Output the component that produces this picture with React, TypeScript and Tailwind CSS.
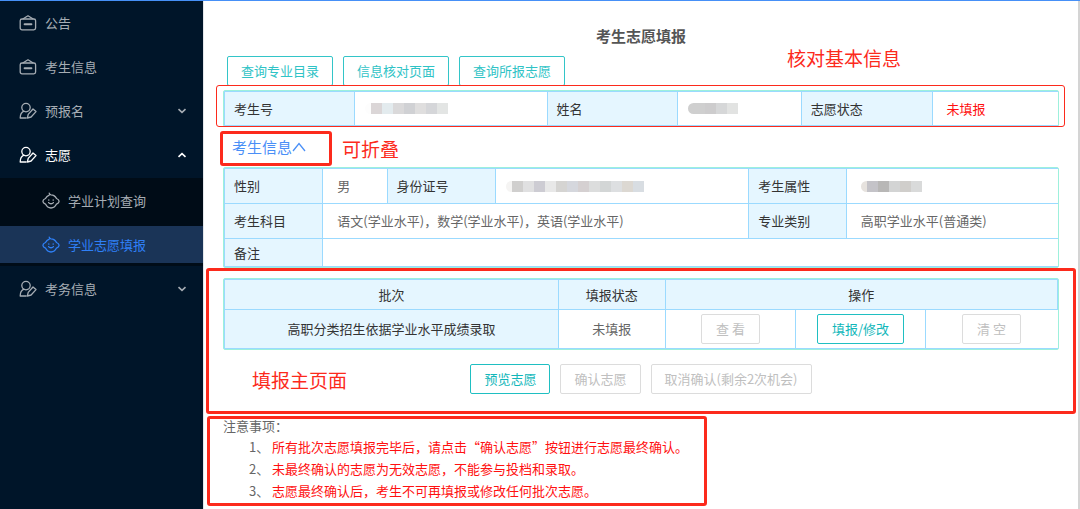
import React, { useState } from 'react';

type MenuItem = {
  label: string;
  icon: 'case' | 'user' | 'face';
  arrow?: 'up' | 'down';
};

const topItems: MenuItem[] = [
  { label: '公告', icon: 'case' },
  { label: '考生信息', icon: 'case' },
  { label: '预报名', icon: 'user', arrow: 'down' },
  { label: '志愿', icon: 'user', arrow: 'up' },
];

const subItems: MenuItem[] = [
  { label: '学业计划查询', icon: 'face' },
  { label: '学业志愿填报', icon: 'face' },
];

const notices = [
  '所有批次志愿填报完毕后，请点击“确认志愿”按钮进行志愿最终确认。',
  '未最终确认的志愿为无效志愿，不能参与投档和录取。',
  '志愿最终确认后，考生不可再填报或修改任何批次志愿。',
];

const MenuIcon: React.FC<{ name: MenuItem['icon'] }> = ({ name }) => (
  <svg
    viewBox="0 0 18 18"
    className="size-[18px] shrink-0"
    fill="none"
    stroke="currentColor"
    strokeWidth="1.3"
    strokeLinecap="round"
    strokeLinejoin="round"
    aria-hidden="true"
  >
    {name === 'case' && (
      <>
        <rect x="1.2" y="5" width="15.4" height="10.8" rx="1.8" />
        <path d="M4.2 4.8 9 1.800l4.800 3" />
        <path d="M5.600 10.200h6.800" strokeWidth="2" />
      </>
    )}
    {name === 'user' && (
      <>
        <circle cx="7" cy="5.600" r="4.200" />
        <path d="M4.800 9.200C2.400 10.400 1.200 12.600 1.200 16h6" />
        <path d="m8.400 16 .8-3.600 4.800-5.400 3 2.600-4.900 5.400z" />
      </>
    )}
    {name === 'face' && (
      <>
        <path d="M7.200 1.200c.2 1.100.7 1.500 1.800 1.600 2.400.1 4.400 1.400 5.500 3.700 1.500.6 2.600 1.600 2.600 2.800s-1.100 2.200-2.600 2.800C13.400 14.500 11.400 16 9 16s-4.400-1.500-5.500-3.900C2 11.500.9 10.500.9 9.300S2 7.100 3.500 6.500C4.300 4.800 5.500 3.700 7.200 3.100" />
        <path d="M6.800 7.800v.4M11.200 7.800v.4M6.600 10.600c1.200 1.500 3.600 1.500 4.800 0" />
      </>
    )}
  </svg>
);

const Chevron: React.FC<{ dir: 'up' | 'down' }> = ({ dir }) => (
  <svg viewBox="0 0 10 6" className="ml-auto h-[6px] w-[10px]" fill="none" stroke="currentColor" strokeWidth="1.6" aria-hidden="true">
    <path d={dir === 'up' ? 'M1.500 4.800 5 1.600l3.500 3.200' : 'M1.500 1.200 5 4.400l3.500-3.200'} />
  </svg>
);

// Masked personal data: a narrow lead-in block, then one swatch per block
const Mosaic: React.FC<{ colors: string[]; label: string }> = ({ colors, label }) => (
  <div role="img" aria-label={label} className="flex h-[11px]">
    {colors.map((color, i) => (
      <span key={i} className="w-[11px] first:w-[6px] first:rounded-l-full" style={{ backgroundColor: color }} />
    ))}
  </div>
);

const btn = 'h-[30px] rounded-xs border bg-white pb-[2px] leading-none whitespace-nowrap';
const btnTeal = `${btn} border-[#33c5c8] text-[#2fc3c6]`;
const btnStrong = `${btn} border-[#1fbfc2] text-[#12b7ba]`;
const btnGray = `${btn} border-[#dcdcdc] text-[#c0c0c0]`;

const tableBox = 'rounded-xs border border-[#9df0dc]';
const table = 'w-full table-fixed border-collapse';
const head = 'border border-[#9bdaff] bg-[#e5f6ff] pl-[9px] text-left font-normal text-[#333]';
const headCenter = 'border border-[#9bdaff] bg-[#e5f6ff] text-center font-normal text-[#333]';
const cell = 'border border-[#9bdaff] pl-[14px] text-left';
const maskCell = 'border border-[#9bdaff] pl-[10px] text-left';
const lastCell = 'border border-r-0 border-[#9bdaff] pl-[14px] text-left';
const centerCell = 'border border-[#9bdaff] text-center';

const frame = 'pointer-events-none absolute rounded-[3px] border-[#fc2a1c]';

const App: React.FC = () => {
  const [open, setOpen] = useState(true);

  return (
    <div className="flex min-h-screen border-t border-[#4690f7] bg-white font-['Noto_Sans_CJK_SC',sans-serif] text-[13px] leading-[22px] text-[#666]">
      <nav className="w-[203px] shrink-0 bg-[#001529] pt-[3px] text-[#a6adb4]">
        <div className="flex flex-col gap-[7px] pb-[5px]">
          {topItems.map((item) => (
            <a
              key={item.label}
              href="#"
              className={`flex h-[37px] items-center gap-2 pr-[16px] pl-[19px] ${item.arrow === 'up' ? 'text-white' : ''}`}
            >
              <MenuIcon name={item.icon} />
              {item.label}
              {item.arrow && <Chevron dir={item.arrow} />}
            </a>
          ))}
        </div>
        <div className="mb-1 flex flex-col gap-[7px] bg-[#000c17] pt-1 pb-[3px]">
          {subItems.map((item, i) => (
            <a
              key={item.label}
              href="#"
              className={`flex h-[37px] items-center gap-2 pl-[42px] ${i === 1 ? 'bg-[#1a3457] text-[#2f80f7]' : ''}`}
            >
              <MenuIcon name={item.icon} />
              {item.label}
            </a>
          ))}
        </div>
        <a href="#" className="flex h-[37px] items-center gap-2 pr-[16px] pl-[19px]">
          <MenuIcon name="user" />
          考务信息
          <Chevron dir="down" />
        </a>
      </nav>

      <main className="min-w-0 grow border-r-2 border-l border-r-[#d4d4d4] border-l-[#e3e6ea] pr-[19px] pl-[19px]">
        <div className="relative">
          <h1 className="pt-6 pb-[9px] text-center text-[15px] font-bold text-[#555]">考生志愿填报</h1>
          <p className="absolute top-[43px] right-[158px] text-[19px] leading-[28px] text-[#fc2a1c]">核对基本信息</p>
        </div>

        <div className="flex gap-[10px] pl-1">
          <button type="button" className={`${btnTeal} px-[13px]`}>查询专业目录</button>
          <button type="button" className={`${btnTeal} px-[13px]`}>信息核对页面</button>
          <button type="button" className={`${btnTeal} px-[13px]`}>查询所报志愿</button>
        </div>

        <section className="relative -mt-px bg-white pt-[5px]">
          <div className={tableBox}>
            <table className={table}>
              <colgroup>
                <col className="w-[15.6%]" />
                <col className="w-[23.1%]" />
                <col className="w-[15.6%]" />
                <col className="w-[14.9%]" />
                <col className="w-[15.7%]" />
                <col />
              </colgroup>
              <tbody>
                <tr className="h-[34px]">
                  <th scope="row" className={head}>考生号</th>
                  <td className={maskCell}>
                    <Mosaic label="考生号" colors={['#fdfdfd', '#dbd6d7', '#e3ebee', '#dad9da', '#d0d1d4', '#dfdede', '#d5d6d9', '#e3e5e4']} />
                  </td>
                  <th scope="row" className={head}>姓名</th>
                  <td className={maskCell}>
                    <Mosaic label="姓名" colors={['#cfcfcf', '#cfcfcf', '#cdcccd', '#d6d7d8', '#e2e3e2']} />
                  </td>
                  <th scope="row" className={head}>志愿状态</th>
                  <td className={`${lastCell} text-[#ff1010]`}>未填报</td>
                </tr>
              </tbody>
            </table>
          </div>
          <div className={`${frame} -right-[6px] -left-[7px] top-0 bottom-0 border`} />
        </section>

        <div className="flex h-[40px] items-center">
          <div className="relative">
            <button type="button" onClick={() => setOpen(!open)} className="flex items-center pl-[9px] text-[15px] text-[#4a8ff7]">
              考生信息
              <svg viewBox="0 0 14 10" className="h-[10px] w-[14px]" fill="none" stroke="currentColor" strokeWidth="1.3" aria-hidden="true">
                <path d={open ? 'M1 9 7 1.500 13 9' : 'M1 1 7 8.500 13 1'} />
              </svg>
            </button>
            <div className={`${frame} -top-[5px] -right-[26px] -bottom-2 -left-[3px] border-3`} />
          </div>
          <p className="pt-1 pl-[36px] text-[19px] text-[#fc2a1c]">可折叠</p>
        </div>

        {open && (
          <div className={tableBox}>
            <table className={table}>
              <colgroup>
                <col className="w-[11.8%]" />
                <col className="w-[7.7%]" />
                <col className="w-[13%]" />
                <col className="w-[30.4%]" />
                <col className="w-[11.7%]" />
                <col />
              </colgroup>
              <tbody>
                <tr className="h-[35px]">
                  <th scope="row" className={head}>性别</th>
                  <td className={cell}>男</td>
                  <th scope="row" className={head}>身份证号</th>
                  <td className={maskCell}>
                    <Mosaic label="身份证号" colors={['#f5f4f3', '#d0cfce', '#e0e0e1', '#cdccd3', '#e8e8e8', '#d5d4d2', '#d5d7dd', '#d5d0d1', '#dcdddd', '#d3d6d6', '#dddfe1', '#dcd8d2', '#d8dde2']} />
                  </td>
                  <th scope="row" className={head}>考生属性</th>
                  <td className={lastCell}>
                    <Mosaic label="考生属性" colors={['#e6e2de', '#c4c3c8', '#b8b7b6', '#d3d4d4', '#d0cecb', '#d9dada']} />
                  </td>
                </tr>
                <tr className="h-[35px]">
                  <th scope="row" className={head}>考生科目</th>
                  <td colSpan={3} className={cell}>语文(学业水平)，数学(学业水平)，英语(学业水平)</td>
                  <th scope="row" className={head}>专业类别</th>
                  <td className={lastCell}>高职学业水平(普通类)</td>
                </tr>
                <tr className="h-[28px]">
                  <th scope="row" className={head}>备注</th>
                  <td colSpan={5} className={lastCell} />
                </tr>
              </tbody>
            </table>
          </div>
        )}

        <section className="relative pt-[10px] pb-5">
          <div className={tableBox}>
            <table className={table}>
              <colgroup>
                <col className="w-[40.1%]" />
                <col className="w-[12.8%]" />
                <col className="w-[15.7%]" />
                <col className="w-[15.5%]" />
                <col />
              </colgroup>
              <thead>
                <tr className="h-[30px]">
                  <th scope="col" className={headCenter}>批次</th>
                  <th scope="col" className={headCenter}>填报状态</th>
                  <th scope="col" colSpan={3} className={headCenter}>操作</th>
                </tr>
              </thead>
              <tbody>
                <tr className="h-[39px]">
                  <th scope="row" className={headCenter}>高职分类招生依据学业水平成绩录取</th>
                  <td className={centerCell}>未填报</td>
                  <td className={centerCell}>
                    <button type="button" disabled className={`${btnGray} px-[14px]`}>查 看</button>
                  </td>
                  <td className={centerCell}>
                    <button type="button" className={`${btnStrong} px-[14px]`}>填报/修改</button>
                  </td>
                  <td className={`${centerCell} border-r-0`}>
                    <button type="button" disabled className={`${btnGray} px-[14px]`}>清 空</button>
                  </td>
                </tr>
              </tbody>
            </table>
          </div>
          <div className="mt-[14px] flex justify-center gap-[10px]">
            <button type="button" className={`${btnStrong} px-[13px]`}>预览志愿</button>
            <button type="button" disabled className={`${btnGray} px-[13px]`}>确认志愿</button>
            <button type="button" disabled className={`${btnGray} px-[13px]`}>取消确认(剩余2次机会)</button>
          </div>
          <p className="absolute bottom-5 left-[29px] text-[19px] leading-[28px] text-[#fc2a1c]">填报主页面</p>
          <div className={`${frame} inset-y-0 -right-[17px] -left-[17px] border-3`} />
        </section>

        <section className="relative mt-[2px] w-fit">
          <h2 className="leading-5">注意事项：</h2>
          <ol className="pb-1 pl-[26px]">
            {notices.map((notice, i) => (
              <li key={notice} className="flex">
                <span className="w-[23px]">{i + 1}、</span>
                <span className="text-[#ff1010]">{notice}</span>
              </li>
            ))}
          </ol>
          <div className={`${frame} inset-y-0 -right-[19px] -left-[16px] border-3`} />
        </section>
      </main>
    </div>
  );
};

export default App;
